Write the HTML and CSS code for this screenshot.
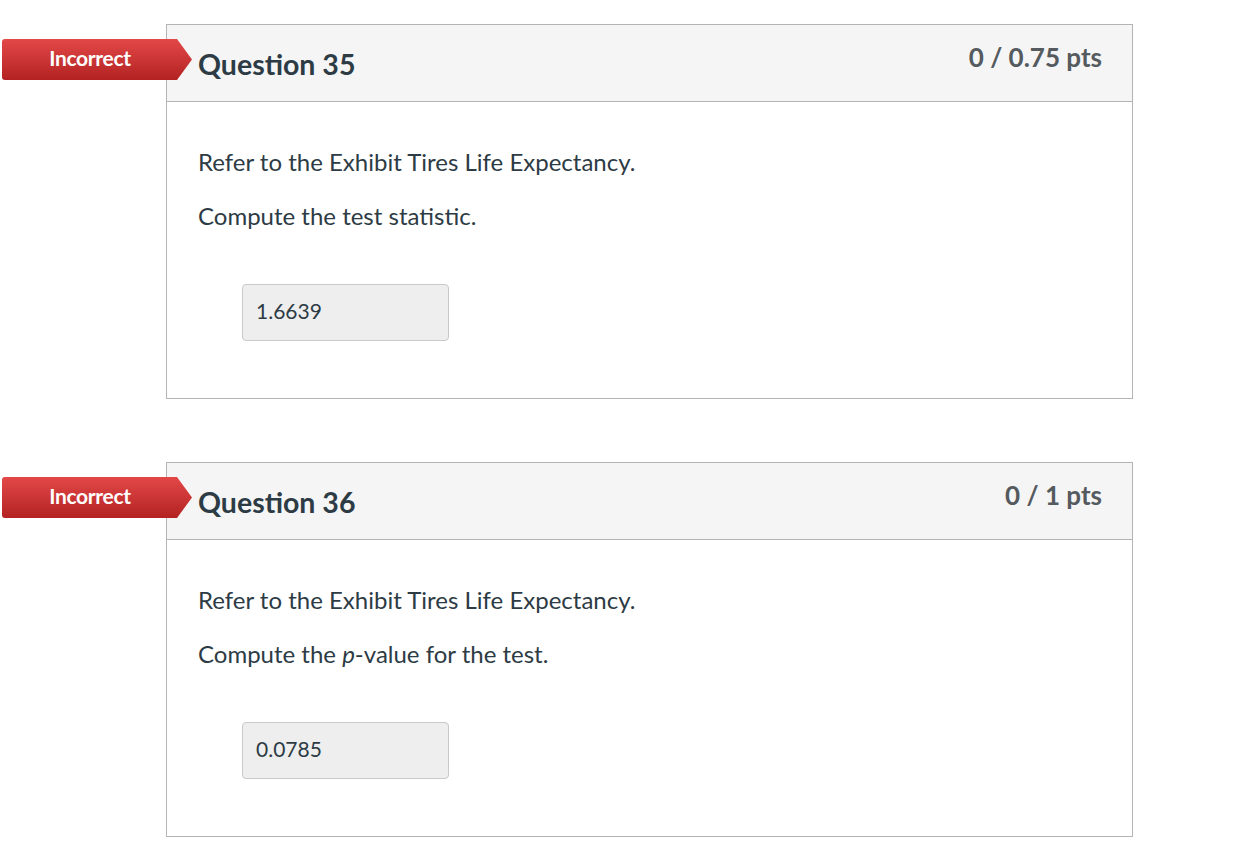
FILE: index.html
```html
<!DOCTYPE html>
<html>
<head>
<meta charset="utf-8">
<link rel="stylesheet" href="styles.css">
</head>
<body>
<div class="quiz">
  <div class="card">
    <div class="badge">Incorrect</div>
    <div class="header">
      <h2 class="title">Question 35</h2>
      <div class="pts">0 / 0.75 pts</div>
    </div>
    <div class="body">
      <p>Refer to the Exhibit Tires Life Expectancy.</p>
      <p>Compute the test statistic.</p>
      <div class="answer">1.6639</div>
    </div>
  </div>
  <div class="card">
    <div class="badge">Incorrect</div>
    <div class="header">
      <h2 class="title">Question 36</h2>
      <div class="pts">0 / 1 pts</div>
    </div>
    <div class="body">
      <p>Refer to the Exhibit Tires Life Expectancy.</p>
      <p>Compute the <em>p</em>-value for the test.</p>
      <div class="answer">0.0785</div>
    </div>
  </div>
</div>
</body>
</html>
```
FILE: styles.css
```css
html, body {
  margin: 0;
  padding: 0;
  background: #fff;
  font-family: Lato, "Open Sans", sans-serif;
  color: #2d3b45;
}
.quiz {
  padding: 24px 0 0 166px;
  width: 967px;
  display: flex;
  flex-direction: column;
  gap: 63px;
}
.card {
  position: relative;
  border: 1px solid #b4b4b4;
  background: #fff;
}
.badge {
  position: absolute;
  left: -165px;
  top: 14px;
  width: 190px;
  height: 41px;
  box-sizing: border-box;
  padding-right: 14px;
  background: linear-gradient(#e34848, #b32222);
  color: #fff;
  font-weight: 700;
  font-size: 21px;
  line-height: 38px;
  text-align: center;
  letter-spacing: -0.3px;
  border-radius: 3px 0 0 3px;
  clip-path: polygon(0 0, 175px 0, 190px 50%, 175px 100%, 0 100%);
}
.header {
  height: 76px;
  background: #f5f5f5;
  border-bottom: 1px solid #b4b4b4;
  display: flex;
  justify-content: space-between;
  align-items: flex-start;
  padding: 0 30px 0 31px;
}
.title {
  margin: 0;
  padding-top: 21px;
  font-size: 28.5px;
  font-weight: 700;
  line-height: 36px;
  color: #2d3b45;
}
.pts {
  padding-top: 16px;
  font-size: 26px;
  font-weight: 700;
  line-height: 32px;
  color: #555a5f;
}
.body {
  padding: 46px 31px 57px;
}
.body p {
  margin: 0 0 26px;
  font-size: 24px;
  line-height: 28px;
  color: #2d3b45;
}
.body p em {
  font-style: italic;
}
.answer {
  margin: 54px 0 0 44px;
  width: 207px;
  height: 57px;
  box-sizing: border-box;
  background: #eeeeee;
  border: 1px solid #c9c9c9;
  border-radius: 4px;
  padding-left: 13px;
  font-size: 21px;
  line-height: 51px;
  color: #2d3b45;
}
```
